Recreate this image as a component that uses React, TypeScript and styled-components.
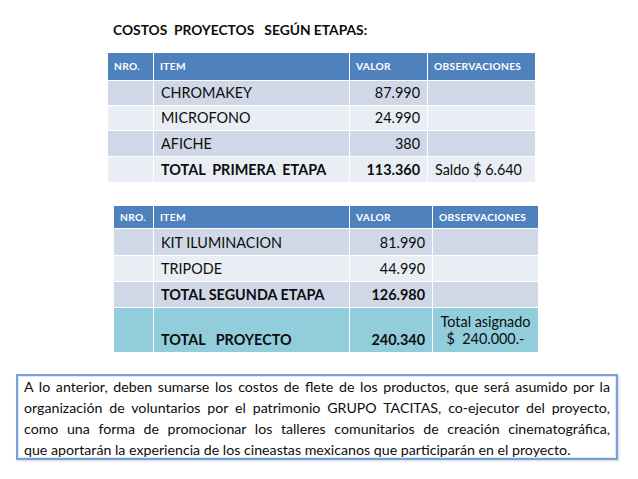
import React from "react";
import styled, { createGlobalStyle } from "styled-components";

const Global = createGlobalStyle`
  html, body { margin: 0; padding: 0; background: #ffffff; overflow: hidden; }
  body { font-family: Lato, "Open Sans", sans-serif; color: #0d0d0d; }
`;

const Page = styled.div`
  width: 638px;
  height: 479px;
  box-sizing: border-box;
  display: flex;
  flex-direction: column;
  align-items: flex-start;
  padding-top: 20px;
  overflow: hidden;
`;

const Title = styled.h1`
  margin: 0 0 0 113px;
  font-size: 13.8px;
  font-weight: 700;
  white-space: pre;
  line-height: 20px;
  color: #0d0d0d;
`;

const Table = styled.table<{ $left: number; $top: number; $width: number }>`
  border-collapse: collapse;
  margin-left: ${(p) => p.$left}px;
  margin-top: ${(p) => p.$top}px;
  width: ${(p) => p.$width}px;
  table-layout: fixed;
  flex: none;
`;

const Col = styled.col<{ $w: number }>`
  width: ${(p) => p.$w}px;
`;

const HeadCell = styled.th<{ $h: number }>`
  height: ${(p) => p.$h}px;
  box-sizing: border-box;
  background: #4f81bd;
  color: #ffffff;
  font-size: 10.2px;
  font-weight: 700;
  text-align: left;
  padding: 0 6px;
  border: 1px solid #ffffff;
  border-top: none;
  letter-spacing: 0.3px;
  white-space: nowrap;
  overflow: hidden;
`;

const Row = styled.tr<{ $tone: "dark" | "light" | "total" }>`
  background: ${(p) =>
    p.$tone === "dark" ? "#d0d8e8" : p.$tone === "light" ? "#e9edf4" : "#92cddc"};
`;

const Cell = styled.td<{ $h: number; $align?: "left" | "right" | "center"; $bold?: boolean; $valign?: "middle" | "bottom" }>`
  height: ${(p) => p.$h}px;
  box-sizing: border-box;
  border: 1px solid #ffffff;
  padding: 0 7px ${(p) => (p.$valign === "bottom" ? "4px" : "0")};
  font-size: 14.4px;
  line-height: 17px;
  text-align: ${(p) => p.$align ?? "left"};
  font-weight: ${(p) => (p.$bold ? 700 : 400)};
  vertical-align: ${(p) => p.$valign ?? "middle"};
  white-space: pre;
  overflow: hidden;
  color: #0d0d0d;
`;

const NoteBox = styled.div`
  margin: 0 0 0 16px;
  width: 602px;
  height: 86px;
  flex: none;
  box-sizing: border-box;
  border: 2px solid #7aa0d4;
  box-shadow: inset 0 0 0 1px #dde7f5, 1px 1px 2px rgba(120, 140, 170, 0.35);
  padding: 0 6px 0 6px;
  font-size: 14.2px;
  line-height: 21px;
  color: #0d0d0d;
`;

const Line = styled.span<{ $last?: boolean }>`
  display: block;
  text-align: ${(p) => (p.$last ? "left" : "justify")};
  text-align-last: ${(p) => (p.$last ? "left" : "justify")};
  white-space: nowrap;
`;

const Spacer = styled.div<{ $h: number }>`
  height: ${(p) => p.$h}px;
  flex: none;
`;

type Item = { name: string; value: string; obs?: string; tone: "dark" | "light"; bold?: boolean; h: number };

const stage1: Item[] = [
  { name: "CHROMAKEY", value: "87.990", tone: "dark", h: 25 },
  { name: "MICROFONO", value: "24.990", tone: "light", h: 25 },
  { name: "AFICHE", value: "380", tone: "dark", h: 26 },
  { name: "TOTAL  PRIMERA  ETAPA", value: "113.360", obs: "Saldo $ 6.640", tone: "light", bold: true, h: 26 },
];

const stage2: Item[] = [
  { name: "KIT ILUMINACION", value: "81.990", tone: "dark", h: 27 },
  { name: "TRIPODE", value: "44.990", tone: "light", h: 26 },
  { name: "TOTAL SEGUNDA ETAPA", value: "126.980", tone: "dark", bold: true, h: 26 },
];

const Header = ({ widths, h }: { widths: number[]; h: number }) => (
  <>
    <colgroup>
      {widths.map((w, i) => (
        <Col key={i} $w={w} />
      ))}
    </colgroup>
    <thead>
      <tr>
        <HeadCell $h={h}>NRO.</HeadCell>
        <HeadCell $h={h}>ITEM</HeadCell>
        <HeadCell $h={h}>VALOR</HeadCell>
        <HeadCell $h={h}>OBSERVACIONES</HeadCell>
      </tr>
    </thead>
  </>
);

const ItemRow = ({ r }: { r: Item }) => (
  <Row $tone={r.tone}>
    <Cell $h={r.h} />
    <Cell $h={r.h} $bold={r.bold}>{r.name}</Cell>
    <Cell $h={r.h} $align="right" $bold={r.bold}>{r.value}</Cell>
    <Cell $h={r.h}>{r.obs ?? ""}</Cell>
  </Row>
);

export default function App() {
  return (
    <Page>
      <Global />
      <Title>{"COSTOS  PROYECTOS   SEGÚN ETAPAS:"}</Title>
      <Table $left={107} $top={13} $width={428}>
        <Header widths={[46, 196, 78, 108]} h={27} />
        <tbody>
          {stage1.map((r) => (
            <ItemRow key={r.name} r={r} />
          ))}
        </tbody>
      </Table>
      <Table $left={113} $top={23} $width={425}>
        <Header widths={[40, 196, 83, 106]} h={23} />
        <tbody>
          {stage2.map((r) => (
            <ItemRow key={r.name} r={r} />
          ))}
          <Row $tone="total">
            <Cell $h={45} />
            <Cell $h={45} $bold $valign="bottom">{"TOTAL   PROYECTO"}</Cell>
            <Cell $h={45} $bold $align="right" $valign="bottom">240.340</Cell>
            <Cell $h={45} $align="center">{"Total asignado\n$  240.000.-"}</Cell>
          </Row>
        </tbody>
      </Table>
      <Spacer $h={21} />
      <NoteBox>
        <Line>A lo anterior, deben sumarse los costos de flete de los productos, que será asumido por la</Line>
        <Line>organización de voluntarios por el patrimonio GRUPO TACITAS, co-ejecutor del proyecto,</Line>
        <Line>como una forma de promocionar los talleres comunitarios de creación cinematográfica,</Line>
        <Line $last>que aportarán la experiencia de los cineastas mexicanos que participarán en el proyecto.</Line>
      </NoteBox>
    </Page>
  );
}
